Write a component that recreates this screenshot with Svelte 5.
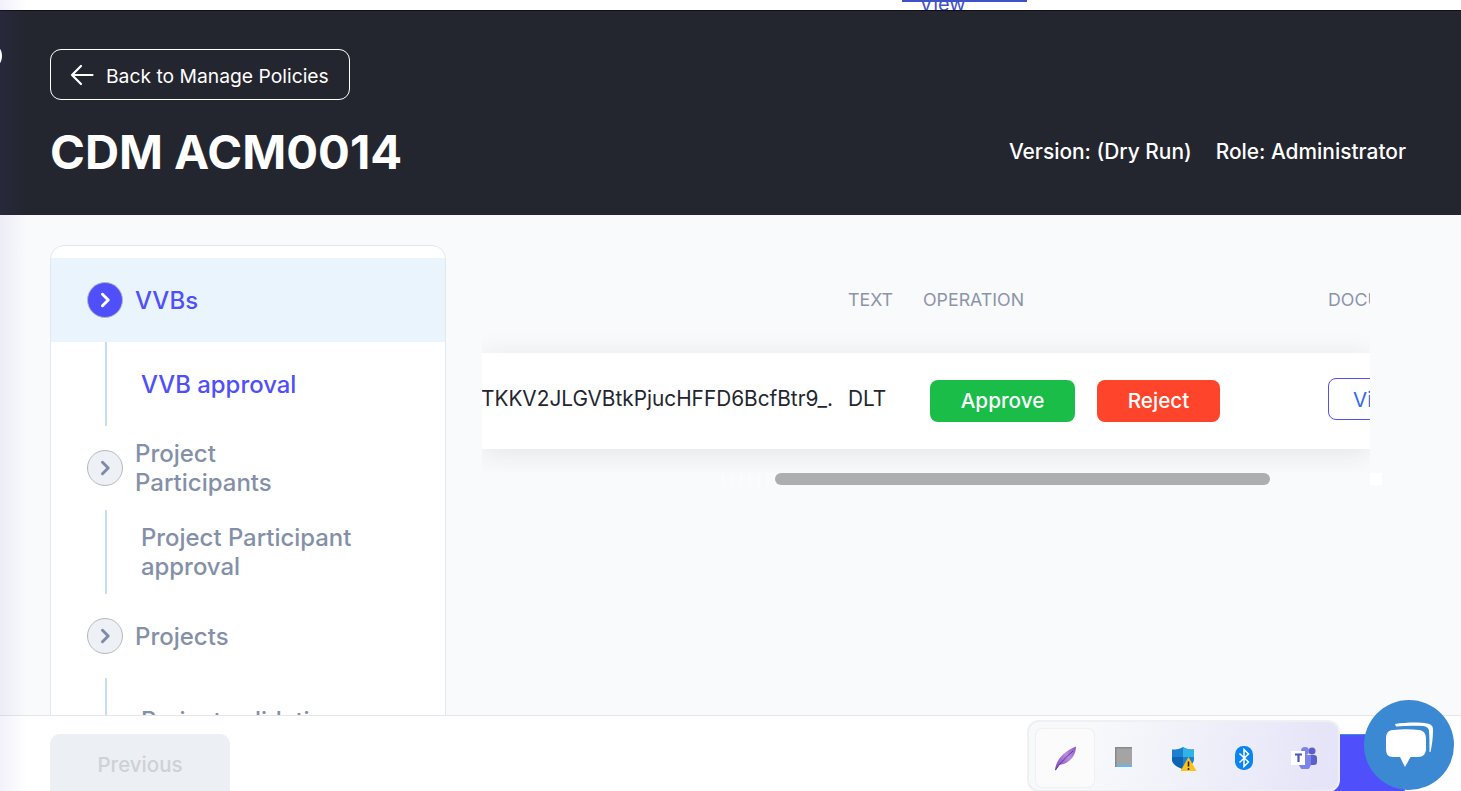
<script>
  const nav = [
    { label: ['VVBs'], sub: ['VVB approval'], active: true },
    { label: ['Project', 'Participants'], sub: ['Project Participant', 'approval'] },
    { label: ['Projects'], sub: ['Project validation'] }
  ];
</script>

<div class="page">
  <div class="topstrip"><a class="viewlink" href="#v">View</a></div>
  <header class="hero">
    <a class="back" href="#b">
      <svg width="24" height="24" viewBox="0 0 24 24" fill="none" stroke="#fff" stroke-width="2.200" stroke-linecap="round" stroke-linejoin="round"><path d="M22.500 12H2M11 3l-9 9 9 9"/></svg>
      <span>Back to Manage Policies</span>
    </a>
    <div class="titlerow">
      <h1>CDM ACM0014</h1>
      <div class="meta"><span>Version: (Dry Run)</span><span>Role: Administrator</span></div>
    </div>
  </header>

  <div class="body">
    <aside class="side">
      {#each nav as item}
        <div class="item" class:active={item.active}>
          <span class="dot">
            <svg width="16" height="16" viewBox="0 0 14 14" fill="none" stroke="currentColor" stroke-width="2.600" stroke-linecap="round" stroke-linejoin="round"><path d="M4.800 2l5 5-5 5"/></svg>
          </span>
          <span class="itemlabel">{#each item.label as l}<span>{l}</span>{/each}</span>
        </div>
        <div class="sub" class:active={item.active}>
          <span class="sublabel">{#each item.sub as l}<span>{l}</span>{/each}</span>
        </div>
      {/each}
    </aside>

    <main class="main">
      <div class="tablewrap">
        <div class="scroller">
          <div class="thead">
            <span class="c1"></span><span class="c2">TEXT</span><span class="c3">OPERATION</span><span class="c4">DOCUMENT</span>
          </div>
          <div class="trow">
            <span class="c1 hash">TKKV2JLGVBtkPjucHFFD6BcfBtr9_.</span>
            <span class="c2 dlt">DLT</span>
            <span class="c3 ops">
              <button class="approve">Approve</button>
              <button class="reject">Reject</button>
            </span>
            <span class="c4"><button class="viewbtn">View Document</button></span>
          </div>
        </div>
        <div class="scrollbar"><div class="track"></div><div class="thumb"></div></div>
        <div class="corner"></div>
      </div>
    </main>
  </div>

  <footer class="foot">
    <button class="prev">Previous</button>
    <button class="next">Next</button>
  </footer>

  <div class="tray">
    <div class="trayitem first">
      <svg width="26" height="26" viewBox="0 0 26 26"><defs><linearGradient id="fg" x1="0" y1="1" x2="1" y2="0"><stop offset="0" stop-color="#7b3fb5"/><stop offset="0.600" stop-color="#b78fdc"/><stop offset="1" stop-color="#8c55c4"/></linearGradient></defs><path d="M3 25C4 15 12 6 24 1.500 24 10 18 19 7 20L3.500 25.500z" fill="url(#fg)"/><path d="M3.500 25C8 18 14 12 21 6" stroke="#6d2fa8" stroke-width="1" fill="none"/></svg>
    </div>
    <div class="trayitem gray">
      <svg width="18" height="20" viewBox="0 0 18 20"><rect x="1" y="0" width="16" height="19" fill="#a4a4a4"/><rect x="1" y="0" width="16" height="1.500" fill="#8a8a8a"/><rect x="1" y="18" width="16" height="2" fill="#5cb8f0"/><rect x="0" y="0" width="1.500" height="20" fill="#888"/></svg>
    </div>
    <div class="trayitem shield">
      <svg width="26" height="26" viewBox="0 0 26 26"><path d="M12 2c3 2 6 2.500 11 2.500V14c0 5-5 8-11 10C6 22 1 19 1 14V4.500C6 4.500 9 4 12 2z" fill="#1a80cf"/><path d="M12 2c3 2 6 2.500 11 2.500V12H12z" fill="#2fb4ea"/><path d="M1 12h11v12C6 22 1 19 1 14z" fill="#0f63b5"/><path d="M17.500 12L25.500 26H9.500z" fill="#fcc21b"/><path d="M17.500 16.500v5" stroke="#222" stroke-width="1.600"/><circle cx="17.500" cy="24" r="1" fill="#222"/></svg>
    </div>
    <div class="trayitem">
      <svg width="18" height="24" viewBox="0 0 18 24"><rect width="18" height="24" rx="8.500" fill="#0a84f2"/><path d="M4.500 7.500l9 8.500-4.500 4.500V3.500l4.500 4.500-9 8.500" fill="none" stroke="#fff" stroke-width="1.500"/></svg>
    </div>
    <div class="trayitem teams">
      <svg width="26" height="22" viewBox="0 0 26 22"><circle cx="21" cy="4" r="3.500" fill="#5b5fc7"/><rect x="17" y="8" width="9" height="10" rx="3" fill="#5b5fc7"/><circle cx="14" cy="4" r="4" fill="#7b83eb"/><path d="M8 8h12v9a6 6 0 0 1-12 0z" fill="#7b83eb"/><rect x="0" y="4" width="14" height="14" fill="#fff"/><path d="M4 7.500h7M7.500 7.500V15" stroke="#4b53bc" stroke-width="2.200"/></svg>
    </div>
  </div>

  <div class="chat">
    <svg width="68" height="68" viewBox="0 0 68 68" fill="#fff"><path d="M20 13C30 11.500 44 11 52 12.500 56 13 58 15 58 19 58 27 57 34 55.500 41L54.500 41C54.500 33 54.500 26 54 20 53.500 16.500 51.500 15.500 48 15 40 14.500 30 14.500 21 15.500z"/><path d="M18 19C28 18 36 18 44 19 49 19.500 51 23 51 28V38C51 43 48 46 43 46H35.500L30 56 25 46H18C13 46 11 43 11 38V28C11 22 13 19.500 18 19z"/></svg>
  </div>
  <div class="shade"></div>
  <div class="blob"></div>
</div>

<style>
  :global(body) { margin: 0; background: #f9fafc; }
  .page {
    position: relative; width: 1461px; height: 791px; overflow: hidden;
    display: flex; flex-direction: column; background: #f9fafc;
    font-family: Inter, "Liberation Sans", sans-serif;
  }
  .topstrip { height: 10px; background: #fff; border-bottom: 1px solid #0e0f14; flex: none; position: relative; overflow: hidden; }
  .viewlink {
    position: absolute; left: 902px; top: -8px; width: 125px; text-align: center; box-sizing: border-box;
    padding-right: 44px;
    font-size: 20px; line-height: 24px; color: #3f51c9; text-decoration: none;
  }
  .viewlink::before { content: ""; position: absolute; left: 0; right: 0; top: 8px; height: 2px; background: #3f51c9; }
  .hero {
    flex: none; height: 204px; box-sizing: border-box; background: #23262f; color: #fff;
    padding: 38px 55px 0 50px;
  }
  .back {
    display: inline-flex; align-items: center; gap: 12px; box-sizing: border-box;
    width: 300px; height: 51px; padding-left: 19px;
    border: 1px solid #fff; border-radius: 11px; color: #fff; text-decoration: none;
    font-size: 19.300px; font-weight: 400;
  }
  .back span { transform: translateY(1px); }
  .titlerow { display: flex; justify-content: space-between; align-items: center; margin-top: 23px; }
  h1 { margin: 0; font-size: 47.200px; line-height: 58px; font-weight: 700; letter-spacing: 0; }
  .meta { display: flex; gap: 24px; font-size: 20.900px; font-weight: 500; transform: translateY(-1px); }
  .body { flex: 1; display: flex; align-items: flex-start; padding: 30px 0 0 50px; min-height: 0; }
  .side {
    width: 396px; box-sizing: border-box; flex: none; background: #fff;
    border: 1px solid #e2e8f0; border-radius: 14px; padding-top: 12px;
  }
  .item {
    height: 84px; box-sizing: border-box; display: flex; align-items: center; gap: 12px; padding-left: 36px;
    color: #8490a8; font-size: 24px; font-weight: 500; line-height: 29px;
  }
  .item.active { background: #e9f4fd; color: #4f4ffb; }
  .dot {
    width: 36px; height: 36px; box-sizing: border-box; border-radius: 50%; border: 1px solid #b5b9c0;
    background: #edf1f6; color: #7f8ba6; display: flex; align-items: center; justify-content: center; flex: none;
  }
  .active .dot { background: #4f4ffb; color: #fff; }
  .itemlabel, .sublabel { display: flex; flex-direction: column; }
  .sub {
    height: 84px; box-sizing: border-box; margin-left: 54px; padding-left: 34px;
    border-left: 2px solid #c7dbfb; display: flex; align-items: center;
    color: #8490a8; font-size: 23.900px; font-weight: 500; line-height: 29px;
  }
  .sub.active { color: #4f4ffb; }
  .main { flex: 1; padding: 0 79px 0 36px; min-width: 0; }
  .tablewrap { width: 900px; position: relative; height: 240px; }
  .scroller { width: 888px; height: 228px; overflow: hidden; }
  .thead { display: flex; height: 108px; align-items: center; color: #8c94a8; font-size: 17.800px; }
  .thead > span { white-space: nowrap; }
  .c1 { width: 366px; flex: none; }
  .c2 { width: 75px; flex: none; }
  .c3 { width: 405px; flex: none; }
  .c4 { flex: 1; white-space: nowrap; }
  .trow {
    display: flex; align-items: center; height: 96px; background: #fff; color: #23262f; font-size: 20.800px;
    box-shadow: 0 4px 26px rgba(30, 35, 50, 0.10);
  }
  .hash { box-sizing: border-box; padding-right: 17px; margin-left: -1px; width: 367px; overflow: hidden; white-space: nowrap; transform: translateY(-3px); }
  .dlt { transform: translateY(-3px); }
  .ops { display: flex; gap: 22px; padding-left: 7px; box-sizing: border-box; }
  button { font-family: inherit; border: 0; cursor: pointer; }
  .approve, .reject { height: 42px; border-radius: 8px; color: #fff; font-size: 20.700px; font-weight: 500; padding-bottom: 2px; }
  .approve { width: 145px; background: #19bd48; }
  .reject { width: 123px; background: #fe442a; }
  .viewbtn {
    width: 160px; height: 42px; background: #fff; border: 1px solid #4f4ffb; border-radius: 8px;
    color: #2f6bf0; font-size: 20.500px; padding: 0 0 0 24px; text-align: left; white-space: nowrap;
    margin-top: -4px; overflow: hidden;
  }
  .scrollbar { position: absolute; left: 0; top: 228px; width: 888px; height: 12px; }
  .track {
    position: absolute; left: 240px; top: 0; width: 53px; height: 12px;
    background: repeating-linear-gradient(90deg, rgba(255,255,255,.35) 0 2px, rgba(255,255,255,0) 2px 9px);
  }
  .thumb { position: absolute; left: 293px; width: 495px; height: 12px; border-radius: 6px; background: #adaeb0; }
  .corner { position: absolute; left: 888px; top: 228px; width: 12px; height: 12px; background: #fff; }
  .foot {
    position: absolute; left: 0; right: 0; top: 715px; height: 76px; box-sizing: border-box;
    background: #fff; border-top: 1px solid #e4e6ea; display: flex; justify-content: space-between;
    padding: 18px 56px 0 50px;
  }
  .prev { width: 180px; height: 64px; border-radius: 10px; background: #eceff3; color: #ced2d6; font-size: 20.500px; font-weight: 500; padding-bottom: 4px; }
  .next { width: 210px; height: 64px; border-radius: 10px; background: #4f4ffb; color: #fff; font-size: 20.500px; border-top: 1px solid #3f8ee0; }
  .tray {
    position: absolute; left: 1027px; top: 720px; width: 313px; height: 72px; box-sizing: border-box;
    border-radius: 12px; border: 2px solid #eff0f4; padding: 7px 7px 0;
    background: linear-gradient(100deg, #f8f9fb 20%, #e4e3f8 100%);
    display: flex; align-items: flex-start;
  }
  .trayitem { width: 58px; height: 58px; display: flex; align-items: center; justify-content: center; flex: none; border-radius: 6px; }
  .trayitem.first { background: #fbfbfc; box-shadow: 0 0 2px rgba(0,0,0,.12); margin-right: 1px; }
  .trayitem.shield { width: 62px; }
  .trayitem.teams { width: 62px; }
  .trayitem.gray svg { transform: translateY(-1px); }
  .chat {
    position: absolute; left: 1364px; top: 700px; width: 90px; height: 90px; border-radius: 50%;
    background: #3b88d3; display: flex; align-items: center; justify-content: center;
  }
  .shade {
    position: absolute; left: 0; top: 0; bottom: 0; width: 26px; pointer-events: none;
    background: linear-gradient(90deg, rgba(90, 70, 190, 0.08), rgba(90, 70, 190, 0));
  }
  .blob { position: absolute; left: -6px; top: 48px; width: 8px; height: 16px; border-radius: 50%; background: #fff; }
</style>
